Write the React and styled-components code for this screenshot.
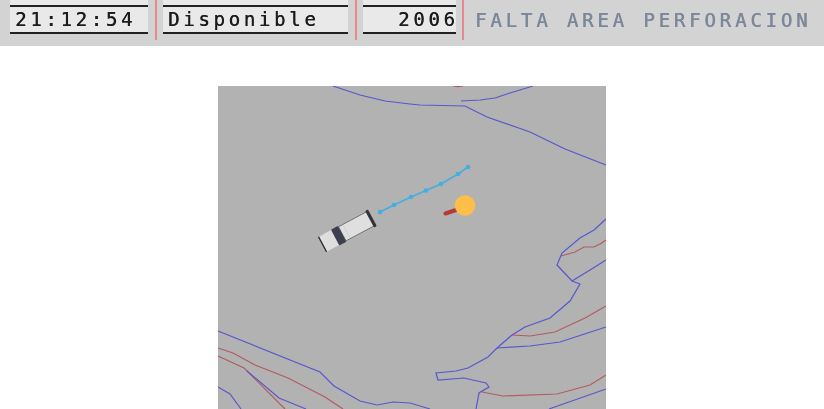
import React from "react";
import styled, { createGlobalStyle } from "styled-components";

const GlobalStyle = createGlobalStyle`
  html, body {
    margin: 0;
    padding: 0;
    background: #fff;
    overflow: hidden;
  }
`
const Page = styled.div`
  width: 824px;
  height: 409px;
  overflow: hidden;
`
const StatusBar = styled.div`
  display: flex;
  align-items: flex-start;
  height: 46px;
  padding-left: 10px;
  background: #d3d3d3;
  font-family: "DejaVu Sans Mono", monospace;
  font-size: 19px;
  letter-spacing: 3.7px;
  filter: blur(0.35px);
`
const Field = styled.div`
  width: ${props => props.width}px;
  height: 34px;
  padding-top: 5px;
  box-sizing: border-box;
  background: #e9e9e9;
`
const FieldValue = styled.div`
  height: 29px;
  box-sizing: border-box;
  border-top: 2px solid #222;
  border-bottom: 2px solid #222;
  padding-left: ${props => props.indent}px;
  line-height: 25px;
  color: #1c1c1c;
  text-shadow: 0.4px 0 0 #1c1c1c;
  white-space: nowrap;
`
const Separator = styled.div`
  flex: none;
  width: 2px;
  height: 40px;
  margin: 0 6px 0 ${props => props.gap}px;
  background: #e58a8c;
`
const Message = styled.div`
  margin-left: 5px;
  line-height: 41px;
  color: #7c8899;
  text-shadow: 0.5px 0 0 #7c8899;
  letter-spacing: 3.85px;
  white-space: nowrap;
`
const MapPanel = styled.div`
  width: 388px;
  height: 323px;
  margin: 40px 0 0 218px;
  background: #b2b2b2;
  overflow: hidden;
  svg {
    display: block;
  }
`

const BLUE_LINES = [
  "333,86 360,95 385,101 410,104 420,105 465,106 487,117 530,132 565,149 606,165",
  "461,101 480,100 495,98 510,93 533,86",
  "606,219 594,230 580,238 562,253 557,265 572,281 580,284 570,301 550,318 525,327 512,335 497,348 488,357 468,368 456,371 436,373 438,380 464,378 486,383 489,387 479,393 476,409",
  "572,281 590,270 606,260",
  "497,348 530,346 560,342 606,327",
  "549,409 606,389",
  "218,331 320,372 334,386 360,401 377,405 393,402 410,403 430,409",
  "247,371 279,398 306,409",
  "218,387 230,394 241,409",
]

const RED_LINES = [
  "453,86 458,86.6 463,86",
  "561,256 575,252 584,247 594,247 600,244 606,240",
  "512,335 530,336 555,332 585,318 606,306",
  "482,392 503,396 557,394 590,385 606,375",
  "218,348 233,353 255,365 288,378 325,397 343,409",
  "218,356 244,368 285,409",
]

const ROUTE = [[380, 212], [394, 205], [411, 197], [426, 190.5], [441, 184], [458, 174], [468, 167]]

const Truck = () => (
  <g transform="translate(347.5 231) rotate(-28)">
    <rect x="-28" y="-8.5" width="17" height="17" rx="1.5" fill="#dedede" />
    <rect x="-29" y="-8.5" width="1.4" height="17" fill="#2c2c32" />
    <rect x="-6" y="-8" width="32" height="16" fill="#dfdfdf" stroke="#5a5a60" strokeWidth="0.7" />
    <line x1="-1" y1="-7.5" x2="-1" y2="7.5" stroke="#cbcbcb" strokeWidth="0.6" />
    <rect x="-14" y="-9" width="8" height="18" rx="1" fill="#3d404e" />
    <rect x="25" y="-9.5" width="3.2" height="19" rx="1.2" fill="#34343c" />
  </g>
)

const TerrainMap = () => (
  <svg width="388" height="323" viewBox="218 86 388 323">
    <g fill="none" strokeWidth="1.2" style={{ filter: "blur(0.25px)" }}>
      {RED_LINES.map((points, i) => <polyline key={i} points={points} stroke="#b25c62" />)}
      {BLUE_LINES.map((points, i) => <polyline key={i} points={points} stroke="#5658cc" />)}
    </g>
    <g style={{ filter: "blur(0.4px)" }}>
      <polyline points={ROUTE.map(p => p.join(",")).join(" ")} fill="none" stroke="#45aee0" strokeWidth="1.7" />
      {ROUTE.map((p, i) => <circle key={i} cx={p[0]} cy={p[1]} r="2.3" fill="#45aee0" />)}
      <Truck />
      <line x1="445.5" y1="213.5" x2="456" y2="210" stroke="#b23a3a" strokeWidth="4" strokeLinecap="round" />
      <circle cx="465" cy="205.5" r="10.3" fill="#fdbf47" />
    </g>
  </svg>
)

export default function App() {
  return (
    <Page>
      <GlobalStyle />
      <StatusBar>
        <Field width={138}><FieldValue indent={5}>21:12:54</FieldValue></Field>
        <Separator gap={7} />
        <Field width={185}><FieldValue indent={5}>Disponible</FieldValue></Field>
        <Separator gap={7} />
        <Field width={93}><FieldValue indent={35}>2006</FieldValue></Field>
        <Separator gap={6} />
        <Message>FALTA AREA PERFORACION</Message>
      </StatusBar>
      <MapPanel>
        <TerrainMap />
      </MapPanel>
    </Page>
  );
}
